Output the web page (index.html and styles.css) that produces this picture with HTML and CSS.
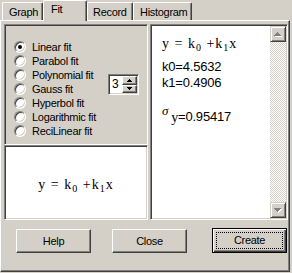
FILE: index.html
```html
<!DOCTYPE html>
<html>
<head>
<meta charset="utf-8">
<link rel="stylesheet" href="styles.css">
</head>
<body>
<div class="tabs">
  <div class="tab t-graph">Graph</div>
  <div class="tab sel t-fit">Fit</div>
  <div class="tab t-record">Record</div>
  <div class="tab t-hist">Histogram</div>
</div>
<div class="panel">
  <div class="content">
    <div class="leftcol">
      <div class="group sunken">
        <div class="radios">
          <div class="radio"><span class="rb checked"></span>Linear fit</div>
          <div class="radio"><span class="rb"></span>Parabol fit</div>
          <div class="radio"><span class="rb"></span>Polynomial fit</div>
          <div class="radio"><span class="rb"></span>Gauss fit</div>
          <div class="radio"><span class="rb"></span>Hyperbol fit</div>
          <div class="radio"><span class="rb"></span>Logarithmic fit</div>
          <div class="radio"><span class="rb"></span>ReciLinear fit</div>
        </div>
        <div class="spin sunken">
          <span class="spin-val">3</span>
          <div class="spin-btns">
            <span class="sbtn"><svg width="5" height="3" viewBox="0 0 5 3" shape-rendering="crispEdges"><rect x="2" y="0" width="1" height="1"/><rect x="1" y="1" width="3" height="1"/><rect x="0" y="2" width="5" height="1"/></svg></span>
            <span class="sbtn"><svg width="5" height="3" viewBox="0 0 5 3" shape-rendering="crispEdges"><rect x="0" y="0" width="5" height="1"/><rect x="1" y="1" width="3" height="1"/><rect x="2" y="2" width="1" height="1"/></svg></span>
          </div>
        </div>
      </div>
      <div class="formula-box sunken">
        <span class="formula">y = k<sub>0</sub> +k<sub>1</sub>x</span>
      </div>
    </div>
    <div class="listbox sunken">
      <div class="list-text">
        <div class="formula f-top">y = k<sub>0</sub> +k<sub>1</sub>x</div>
        <div class="line">k0=4.5632</div>
        <div class="line">k1=0.4906</div>
        <div class="line sigma-line"><span class="sigma">σ</span><span class="sy">y</span>=0.95417</div>
      </div>
      <div class="scrollbar">
        <div class="scbtn"><svg width="8" height="5" viewBox="0 0 8 5" shape-rendering="crispEdges"><g fill="#fff"><rect x="4" y="1" width="1" height="1"/><rect x="3" y="2" width="3" height="1"/><rect x="2" y="3" width="5" height="1"/><rect x="1" y="4" width="7" height="1"/></g><g fill="#808080"><rect x="3" y="0" width="1" height="1"/><rect x="2" y="1" width="3" height="1"/><rect x="1" y="2" width="5" height="1"/><rect x="0" y="3" width="7" height="1"/></g></svg></div>
        <div class="track"></div>
        <div class="scbtn"><svg width="8" height="5" viewBox="0 0 8 5" shape-rendering="crispEdges"><g fill="#fff"><rect x="1" y="1" width="7" height="1"/><rect x="2" y="2" width="5" height="1"/><rect x="3" y="3" width="3" height="1"/><rect x="4" y="4" width="1" height="1"/></g><g fill="#808080"><rect x="0" y="0" width="7" height="1"/><rect x="1" y="1" width="5" height="1"/><rect x="2" y="2" width="3" height="1"/><rect x="3" y="3" width="1" height="1"/></g></svg></div>
      </div>
    </div>
  </div>
  <div class="buttons">
    <div class="btn b-help">Help</div>
    <div class="btn b-close">Close</div>
    <div class="btn b-create default">Create</div>
  </div>
</div>
</body>
</html>
```
FILE: styles.css
```css
* { box-sizing: border-box; }
html, body { margin: 0; padding: 0; }
body {
  width: 292px;
  height: 273px;
  overflow: hidden;
  background: #d4d0c8;
  font-family: "Liberation Sans", Arial, sans-serif;
  font-size: 11px;
  letter-spacing: -0.3px;
  color: #000;
}

/* tabs */
.tabs {
  display: flex;
  align-items: flex-end;
  height: 20px;
  padding-left: 2px;
}
.tab {
  height: 18px;
  padding-top: 1px;
  line-height: 16px;
  border-top: 1px solid #fff;
  border-left: 1px solid #fff;
  border-right: 1px solid #404040;
  box-shadow: inset -1px 0 0 #808080;
  border-top-left-radius: 2px;
  border-top-right-radius: 2px;
  white-space: nowrap;
}
.tab.sel {
  height: 21px;
  padding-top: 0;
  margin-bottom: -1px;
  position: relative;
  z-index: 2;
  background: #d4d0c8;
}
.t-graph { width: 41px; padding-left: 6px; }
.t-fit { width: 44px; padding-left: 7px; }
.t-record { width: 46px; padding-left: 5px; }
.t-hist { width: 59px; padding-left: 6px; }

/* panel */
.panel {
  width: 290px;
  height: 252px;
  border: 1px solid;
  border-color: #fff #404040 #404040 #fff;
  box-shadow: inset -1px -1px 0 #808080;
  padding: 3px 0 0 3px;
}
.content {
  display: flex;
  gap: 2px;
  height: 196px;
}
.sunken {
  border: 1px solid;
  border-color: #808080 #fff #fff #808080;
  box-shadow: inset 1px 1px 0 #404040, inset -1px -1px 0 #d4d0c8;
}
.leftcol {
  width: 144px;
  display: flex;
  flex-direction: column;
}
.group {
  height: 121px;
  display: flex;
  align-items: flex-start;
  padding: 15px 0 0 9px;
}
.radios {
  width: 94px;
  display: flex;
  flex-direction: column;
}
.radio {
  height: 14px;
  line-height: 14px;
  display: flex;
  align-items: center;
  white-space: nowrap;
}
.rb {
  width: 12px;
  height: 12px;
  flex: none;
  border-radius: 50%;
  border: 1px solid;
  border-color: #808080 #fff #fff #808080;
  background: #fff;
  box-shadow: inset 1px 1px 0 #404040, inset -1px -1px 0 #d4d0c8;
  margin-right: 6px;
  display: flex;
  align-items: center;
  justify-content: center;
}
.rb.checked::after {
  content: "";
  width: 4px;
  height: 4px;
  border-radius: 50%;
  background: #000;
}

/* spin */
.spin {
  margin-top: 34px;
  width: 31px;
  height: 21px;
  background: #fff;
  display: flex;
  padding: 1px;
}
.spin-val {
  flex: 1;
  font-size: 12px;
  line-height: 17px;
  padding-left: 2px;
}
.spin-btns {
  width: 15px;
  display: flex;
  flex-direction: column;
}
.sbtn {
  flex: 1;
  background: #d4d0c8;
  border: 1px solid;
  border-color: #fff #404040 #404040 #fff;
  box-shadow: inset -1px -1px 0 #808080;
  display: flex;
  align-items: center;
  justify-content: center;
}
.sbtn svg { display: block; }

/* formula */
.formula-box {
  height: 75px;
  background: #fff;
  display: flex;
  align-items: center;
  justify-content: center;
  padding-top: 4px;
}
.formula {
  font-family: "Liberation Serif", "Times New Roman", serif;
  font-size: 14px;
  letter-spacing: 1px;
  white-space: pre;
}
.formula sub {
  font-size: 10px;
  vertical-align: -3px;
  line-height: 0;
}

/* listbox */
.listbox {
  width: 138px;
  background: #fff;
  display: flex;
  padding: 1px;
}
.list-text {
  flex: 1;
  padding: 8px 0 0 10px;
}
.f-top {
  line-height: 20px;
  height: 20px;
}
.line {
  font-size: 13px;
  line-height: 16px;
  letter-spacing: -0.2px;
}
.f-top + .line { margin-top: 5px; }
.sigma-line { margin-top: 18px; }
.sigma {
  font-family: "Liberation Serif", "Times New Roman", serif;
  font-size: 13px;
  font-style: italic;
  vertical-align: 6px;
  line-height: 0;
  margin-right: 3px;
}
.sy {
  font-family: "Liberation Serif", "Times New Roman", serif;
  font-size: 14px;
  vertical-align: -1px;
}

/* scrollbar */
.scrollbar {
  width: 16px;
  display: flex;
  flex-direction: column;
}
.scbtn {
  height: 16px;
  flex: none;
  background: #d4d0c8;
  border: 1px solid;
  border-color: #d4d0c8 #404040 #404040 #d4d0c8;
  box-shadow: inset 1px 1px 0 #fff, inset -1px -1px 0 #808080;
  display: flex;
  align-items: center;
  justify-content: center;
}
.scbtn svg { display: block; }
.track {
  flex: 1;
  background: repeating-conic-gradient(#fff 0 25%, #d4d0c8 0 50%) 0 0 / 2px 2px;
}

/* buttons */
.buttons {
  display: flex;
  align-items: flex-start;
  margin-top: 8px;
}
.btn {
  width: 75px;
  height: 25px;
  line-height: 23px;
  text-align: center;
  border: 1px solid;
  border-color: #fff #404040 #404040 #fff;
  box-shadow: inset -1px -1px 0 #808080;
  position: relative;
}
.b-help { margin-left: 12px; margin-top: 1px; height: 24px; line-height: 22px; }
.b-close { margin-left: 21px; margin-top: 1px; height: 24px; line-height: 22px; }
.b-create { margin-left: 25px; }
.btn.default {
  border-color: #000;
  box-shadow: inset 1px 1px 0 #fff, inset -1px -1px 0 #404040, inset -2px -2px 0 #808080;
}
.btn.default::after {
  content: "";
  position: absolute;
  left: 3px;
  top: 3px;
  right: 3px;
  bottom: 3px;
  border: 1px dotted #000;
}
```
